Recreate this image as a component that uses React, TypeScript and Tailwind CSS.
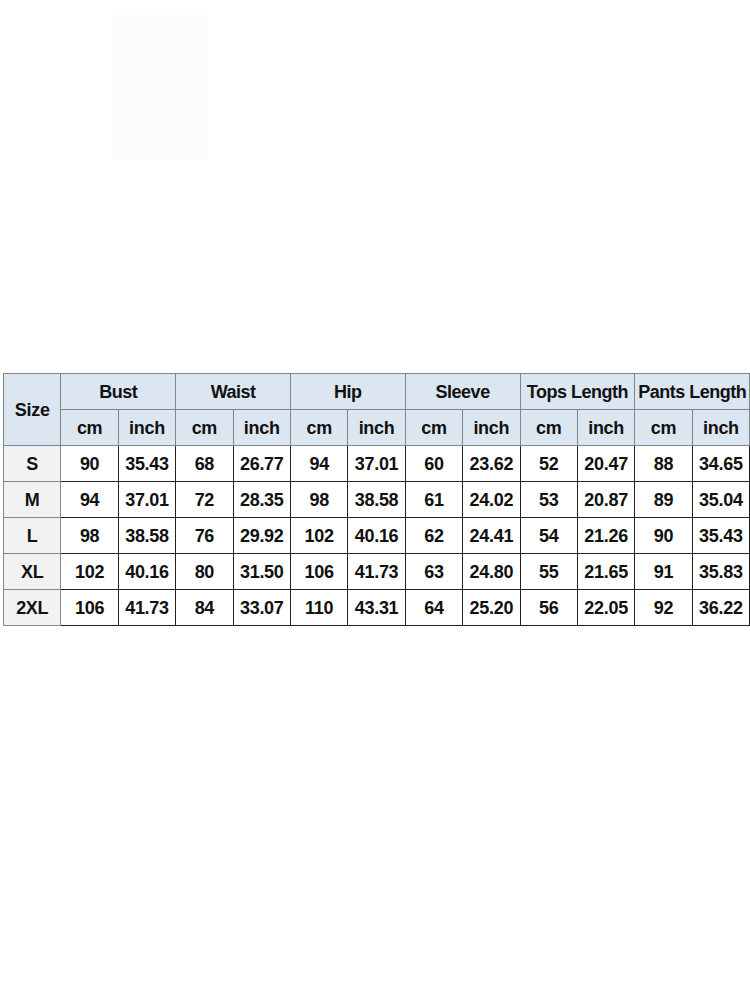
import React from 'react';

const groups = ['Bust', 'Waist', 'Hip', 'Sleeve', 'Tops Length', 'Pants Length'];

const rows: [string, string[]][] = [
  ['S', ['90', '35.43', '68', '26.77', '94', '37.01', '60', '23.62', '52', '20.47', '88', '34.65']],
  ['M', ['94', '37.01', '72', '28.35', '98', '38.58', '61', '24.02', '53', '20.87', '89', '35.04']],
  ['L', ['98', '38.58', '76', '29.92', '102', '40.16', '62', '24.41', '54', '21.26', '90', '35.43']],
  ['XL', ['102', '40.16', '80', '31.50', '106', '41.73', '63', '24.80', '55', '21.65', '91', '35.83']],
  ['2XL', ['106', '41.73', '84', '33.07', '110', '43.31', '64', '25.20', '56', '22.05', '92', '36.22']],
];

const head = 'border border-[#7d8590] bg-[#dce6f1] text-center p-0';

const App: React.FC = () => {
  return (
    <div className="w-[750px] h-[1000px] bg-white overflow-hidden" style={{ fontFamily: '"Liberation Sans", Arial, sans-serif' }}>
      <div className="ml-[112px] mt-[15px] w-[95px] h-[145px] bg-[#fcfcfc]" />
      <table className="ml-[3px] mt-[213px] w-[746px] table-fixed border-collapse border border-[#333] text-[18px] font-bold text-[#111] leading-none tracking-[-0.3px]">
        <colgroup>
          {Array.from({ length: 13 }).map((_, i) => (
            <col key={i} className="w-[57.4px]" />
          ))}
        </colgroup>
        <thead>
          <tr className="h-[36px]">
            <th rowSpan={2} className={head}>Size</th>
            {groups.map((g) => (
              <th key={g} colSpan={2} className={`${head} whitespace-nowrap tracking-[-0.5px]`}>{g}</th>
            ))}
          </tr>
          <tr className="h-[36px]">
            {groups.map((g) => (
              <React.Fragment key={g}>
                <th className={head}>cm</th>
                <th className={head}>inch</th>
              </React.Fragment>
            ))}
          </tr>
        </thead>
        <tbody>
          {rows.map(([size, vals]) => (
            <tr key={size} className="h-[36px]">
              <td className="border border-[#888] bg-[#f2f2f2] text-center p-0">{size}</td>
              {vals.map((v, i) => (
                <td key={i} className="border border-[#222] text-center p-0">{v}</td>
              ))}
            </tr>
          ))}
        </tbody>
      </table>
    </div>
  );
};

export default App;
